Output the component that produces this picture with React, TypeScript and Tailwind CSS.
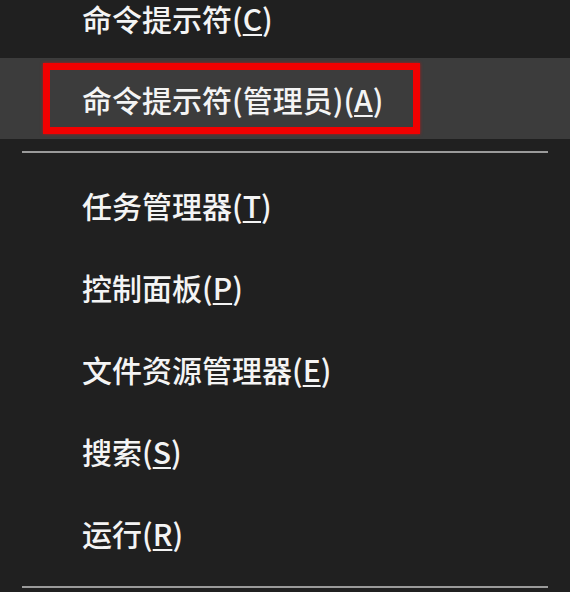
const items = [
  { label: "任务管理器", key: "T" },
  { label: "控制面板", key: "P" },
  { label: "文件资源管理器", key: "E" },
  { label: "搜索", key: "S" },
  { label: "运行", key: "R" },
];

function Label({ text, accel, after }: { text: string; accel: string; after?: string }) {
  return (
    <span className="whitespace-nowrap leading-none">
      {text}
      {after}(<span className="underline decoration-2 underline-offset-[3px]">{accel}</span>)
    </span>
  );
}

function Separator() {
  return (
    <div className="flex h-[25px] items-center px-[22px]">
      <div className="h-[2px] w-[527px] bg-[#9a9a9a]" />
    </div>
  );
}

export default function App() {
  return (
    <div
      className="h-[592px] w-[570px] overflow-hidden bg-[#202020] text-[30px] leading-none font-medium text-[#f4f4f4]"
      style={{ fontFamily: '"Microsoft YaHei", "Noto Sans CJK SC", sans-serif' }}
    >
      <div className="flex h-[58px] items-start pl-[82px] pt-[3px]">
        <Label text="命令提示符" accel="C" />
      </div>

      <div className="flex h-[81px] items-center bg-[#3c3c3c] pl-[43px]">
        <div className="flex h-[71px] w-[377px] items-center border-[7px] border-[#f20000] pl-[32px] shadow-[0_0_3px_rgba(255,0,0,0.6)]">
          <Label text="命令提示符" after="(管理员)" accel="A" />
        </div>
      </div>

      <Separator />

      {items.map((item) => (
        <div key={item.key} className="flex h-[82px] items-center pl-[82px]">
          <Label text={item.label} accel={item.key} />
        </div>
      ))}

      <Separator />
    </div>
  );
}
